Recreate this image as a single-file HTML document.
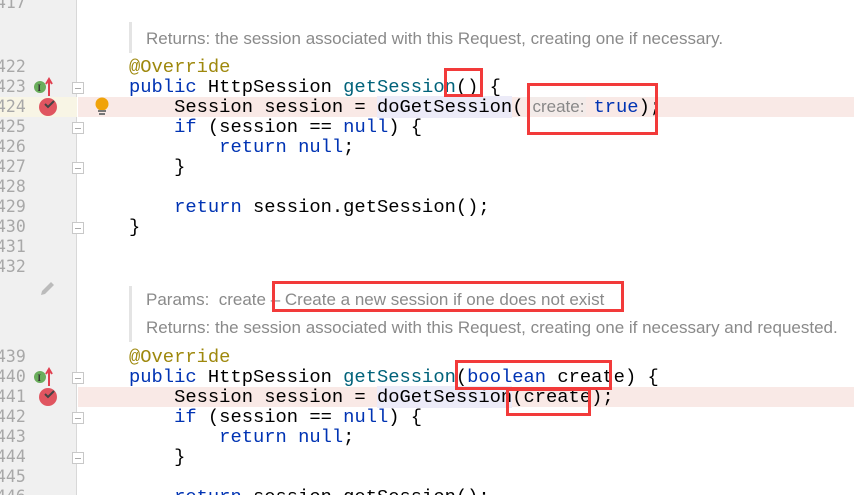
<!DOCTYPE html>
<html style="width:854px;height:495px;overflow:hidden"><head><meta charset="utf-8"><style>
*{margin:0;padding:0;box-sizing:border-box}
body{width:854px;height:495px;overflow:hidden;background:#fff;position:relative;font-family:"Liberation Mono",monospace}
.gut{position:absolute;left:0;top:0;width:77px;height:495px;background:#f0f0f0;border-right:1px solid #d8d8d8}
.ln{position:absolute;left:-4px;font:16.5px "DejaVu Sans Mono","Liberation Mono",monospace;color:#a8a8a8;height:20px;line-height:20px}
.c{position:absolute;left:129px;font-size:18.8px;line-height:20px;height:20px;white-space:pre;color:#000}
.k{color:#0033b3}.a{color:#9e880d}.f{color:#00627a}
.hl{position:absolute;left:78px;width:776px;height:20px;background:#f9e9e6}
.doc{position:absolute;left:129px;border-left:3px solid #e4e4e4;padding-left:14px;font:17px "Liberation Sans",sans-serif;color:#8a8a8a;line-height:28px;white-space:nowrap}
.box{position:absolute;border:3px solid #f23a3a}
.fold{position:absolute;left:72px;width:12px;height:12px;border:1px solid #c8c8c8;background:#fff}
.fold:after{content:"";position:absolute;left:2px;top:5px;width:6px;height:1px;background:#aaa}
</style></head><body>
<div class="gut"></div>
<div class="hl" style="top:97px"></div>
<div style="position:absolute;left:0;top:97px;width:77px;height:20px;background:#f8f5e5"></div>
<div class="hl" style="top:387px"></div>

<div class="ln" style="top:-7px">417</div>
<div class="ln" style="top:57px">422</div>
<div class="ln" style="top:77px">423</div>
<div class="ln" style="top:97px">424</div>
<div class="ln" style="top:117px">425</div>
<div class="ln" style="top:137px">426</div>
<div class="ln" style="top:157px">427</div>
<div class="ln" style="top:177px">428</div>
<div class="ln" style="top:197px">429</div>
<div class="ln" style="top:217px">430</div>
<div class="ln" style="top:237px">431</div>
<div class="ln" style="top:257px">432</div>
<div class="ln" style="top:347px">439</div>
<div class="ln" style="top:367px">440</div>
<div class="ln" style="top:387px">441</div>
<div class="ln" style="top:407px">442</div>
<div class="ln" style="top:427px">443</div>
<div class="ln" style="top:447px">444</div>
<div class="ln" style="top:467px">445</div>
<div class="ln" style="top:487px">446</div>

<div class="fold" style="top:82px"></div><div class="fold" style="top:122px"></div><div class="fold" style="top:162px"></div><div class="fold" style="top:222px"></div>
<div class="fold" style="top:372px"></div><div class="fold" style="top:412px"></div><div class="fold" style="top:452px"></div>

<svg style="position:absolute;left:30px;top:76px" width="32" height="44"><circle cx="10" cy="11" r="6" fill="#6aae5c"/><text x="7.5" y="15" font-size="9" font-family="Liberation Serif" font-weight="bold" fill="#333">I</text><path d="M19 20V4M16 8L19 3 22 8" stroke="#e04050" stroke-width="2" fill="none"/><circle cx="18" cy="31" r="9" fill="#e05560"/><path d="M15 28l3 3 6-6" stroke="#444" stroke-width="2" fill="none"/></svg>
<svg style="position:absolute;left:30px;top:366px" width="32" height="44"><circle cx="10" cy="11" r="6" fill="#6aae5c"/><text x="7.5" y="15" font-size="9" font-family="Liberation Serif" font-weight="bold" fill="#333">I</text><path d="M19 20V4M16 8L19 3 22 8" stroke="#e04050" stroke-width="2" fill="none"/><circle cx="18" cy="31" r="9" fill="#e05560"/><path d="M15 28l3 3 6-6" stroke="#444" stroke-width="2" fill="none"/></svg>
<svg style="position:absolute;left:93px;top:96px" width="18" height="22"><circle cx="9" cy="8" r="6.5" fill="#f0a30a"/><rect x="5" y="14" width="8" height="2" fill="#777"/><rect x="6" y="17" width="6" height="2" fill="#777"/></svg>
<svg style="position:absolute;left:38px;top:278px" width="20" height="20"><path d="M3 17l1-4 9-9 3 3-9 9z" fill="#bbb"/></svg>

<div class="doc" style="top:22px;height:31px;line-height:33px">Returns: the session associated with this Request, creating one if necessary.</div>
<div class="c" style="top:57px"><span class="a">@Override</span></div>
<div class="c" style="top:77px"><span class="k">public</span> HttpSession <span class="f">getSession</span>() {</div>
<div class="c" style="top:97px">    Session session = <span style="background:#ecebf8">doGetSession</span>(<span style="font:17px 'Liberation Sans',sans-serif;color:#888;background:#f3ebe9;padding:0 2px;margin-left:7px">create:</span><span class="k" style="margin-left:7px">true</span>);</div>
<div class="c" style="top:117px">    <span class="k">if</span> (session == <span class="k">null</span>) {</div>
<div class="c" style="top:137px">        <span class="k">return null</span>;</div>
<div class="c" style="top:157px">    }</div>
<div class="c" style="top:197px">    <span class="k">return</span> session.getSession();</div>
<div class="c" style="top:217px">}</div>

<div class="doc" style="top:286px;height:56px">Params:&nbsp; create – Create a new session if one does not exist<br>Returns: the session associated with this Request, creating one if necessary and requested.</div>
<div class="c" style="top:347px"><span class="a">@Override</span></div>
<div class="c" style="top:367px"><span class="k">public</span> HttpSession <span class="f">getSession</span>(<span class="k">boolean</span> create) {</div>
<div class="c" style="top:387px">    Session session = <span style="background:#ecebf8">doGetSession</span>(create);</div>
<div class="c" style="top:407px">    <span class="k">if</span> (session == <span class="k">null</span>) {</div>
<div class="c" style="top:427px">        <span class="k">return null</span>;</div>
<div class="c" style="top:447px">    }</div>
<div class="c" style="top:487px">    <span class="k">return</span> session.getSession();</div>

<div class="box" style="left:444px;top:68px;width:39px;height:29px"></div>
<div class="box" style="left:527px;top:83px;width:131px;height:52px"></div>
<div class="box" style="left:272px;top:281px;width:352px;height:31px"></div>
<div class="box" style="left:455px;top:360px;width:157px;height:30px"></div>
<div class="box" style="left:506px;top:388px;width:85px;height:28px"></div>
</body></html>
